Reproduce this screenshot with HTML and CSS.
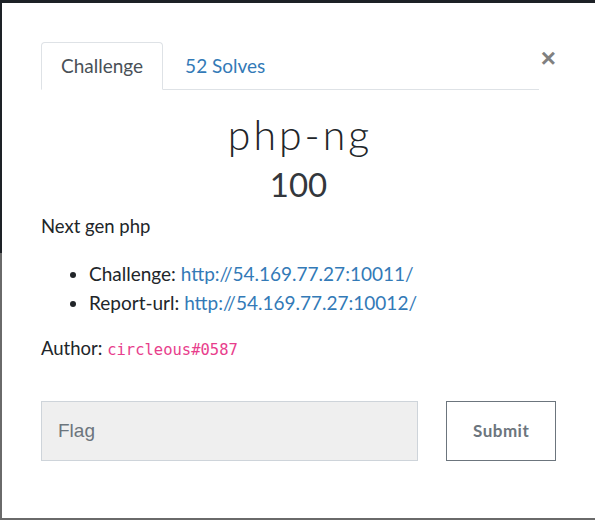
FILE: index.html
```html
<!DOCTYPE html>
<html>
<head>
<meta charset="utf-8">
<link rel="stylesheet" href="styles.css">
</head>
<body>
<div class="modal">
  <div class="header">
    <ul class="tabs">
      <li class="tab active">Challenge</li>
      <li class="tab link">52 Solves</li>
    </ul>
    <span class="close">&times;</span>
  </div>
  <div class="body">
    <h2 class="title">php-ng</h2>
    <h3 class="value">100</h3>
    <p class="desc">Next gen php</p>
    <ul class="links">
      <li>Challenge: <a href="#">http://54.169.77.27:10011/</a></li>
      <li>Report-url: <a href="#">http://54.169.77.27:10012/</a></li>
    </ul>
    <p class="author">Author: <code>circleous#0587</code></p>
    <div class="form">
      <div class="input">Flag</div>
      <div class="submit">Submit</div>
    </div>
  </div>
</div>
</body>
</html>
```
FILE: styles.css
```css
html, body { margin: 0; padding: 0; }
body {
  width: 595px;
  height: 520px;
  overflow: hidden;
  background: linear-gradient(to bottom, #1d2126 0, #1d2126 253px, #6a6a6a 253px);
  font-family: Lato, "Open Sans", sans-serif;
  color: #212529;
}
.modal {
  margin: 3px 0 0 2px;
  height: 515px;
  background: #fff;
  box-sizing: border-box;
  padding: 39px 39px 0 39px;
}
.header {
  display: flex;
  align-items: flex-start;
}
.tabs {
  list-style: none;
  margin: 0;
  padding: 0;
  display: flex;
  width: 500px;
  border-bottom: 1px solid #dee2e6;
}
.tab {
  font-size: 19px;
  height: 48px;
  box-sizing: border-box;
  line-height: 46px;
  padding: 0 19px;
  margin-bottom: -1px;
  border: 1px solid transparent;
  border-radius: 4px 4px 0 0;
}
.tab.active {
  color: #495057;
  border-color: #dee2e6 #dee2e6 #fff;
  background: #fff;
}
.tab.link {
  color: #337ab7;
  padding-left: 21px;
}
.close {
  margin-left: 2px;
  margin-top: 4px;
  font-size: 26px;
  line-height: 24px;
  font-weight: 700;
  color: #808080;
  font-family: "Liberation Sans", Arial, sans-serif;
}
.title {
  margin: 21px 0 0;
  padding-left: 3px;
  text-align: center;
  font-weight: 300;
  font-size: 41px;
  line-height: 48px;
  letter-spacing: 3px;
  color: #212529;
}
.value {
  margin: 5px 0 0;
  text-align: center;
  font-weight: 400;
  font-size: 33px;
  line-height: 40px;
  color: #33373c;
}
.desc {
  margin: 9px 0 0;
  font-size: 18.5px;
  line-height: 27px;
}
.links {
  margin: 19px 0 0;
  padding-left: 48px;
  font-size: 19px;
  line-height: 29px;
}
.links a { color: #337ab7; text-decoration: none; }
.author {
  margin: 18px 0 0;
  font-size: 18.5px;
  line-height: 27px;
}
.author code {
  font-family: "DejaVu Sans Mono", "Liberation Mono", monospace;
  font-size: 15.5px;
  color: #e83e8c;
}
.form {
  margin-top: 37px;
  display: flex;
  gap: 28px;
}
.input {
  width: 378px;
  height: 60px;
  box-sizing: border-box;
  background: #efefef;
  border: 1px solid #ced4da;
  padding-left: 16px;
  line-height: 58px;
  font-family: "Liberation Sans", Arial, sans-serif;
  font-size: 19px;
  color: #6c757d;
}
.submit {
  width: 110px;
  height: 60px;
  box-sizing: border-box;
  border: 1px solid #6c757d;
  text-align: center;
  line-height: 58px;
  font-size: 17px;
  font-weight: 700;
  letter-spacing: 0.5px;
  color: #6c757d;
}
```
